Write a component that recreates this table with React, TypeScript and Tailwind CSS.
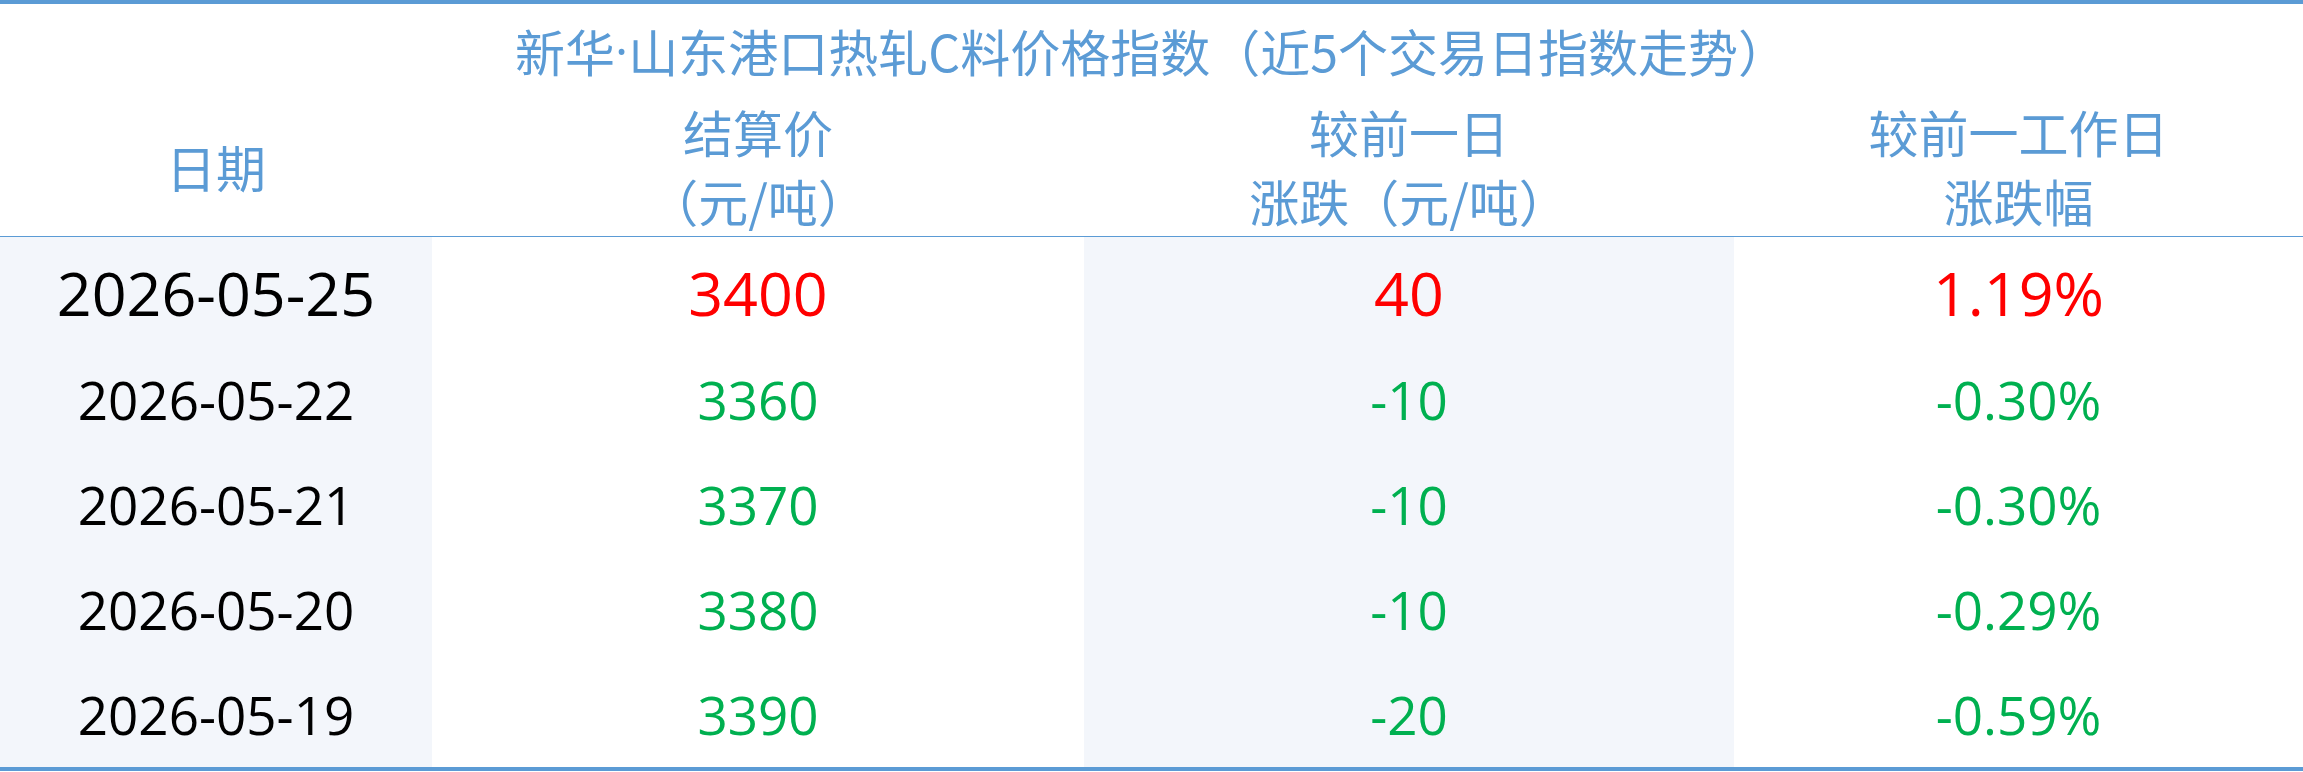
import React from "react";

const rows = [
  { date: "2026-05-25", price: "3400", diff: "40", pct: "1.19%", up: true },
  { date: "2026-05-22", price: "3360", diff: "-10", pct: "-0.30%", up: false },
  { date: "2026-05-21", price: "3370", diff: "-10", pct: "-0.30%", up: false },
  { date: "2026-05-20", price: "3380", diff: "-10", pct: "-0.29%", up: false },
  { date: "2026-05-19", price: "3390", diff: "-20", pct: "-0.59%", up: false },
];

export default function App() {
  return (
    <div className="w-[2303px] h-[772px] bg-white overflow-hidden">
      <div className="border-t-4 border-b-4 border-[#5b9bd5] flex flex-col">
        <div
          className="h-[92px] flex items-center justify-center text-[50px] text-[#5b9bd5] leading-none"
          style={{ fontFamily: '"Noto Sans CJK SC", sans-serif' }}
        >
          新华
          <span style={{ fontFamily: '"Open Sans", sans-serif' }}>·</span>
          山东港口热轧C料价格指数（近5个交易日指数走势）
        </div>
        <div
          className="h-[141px] flex border-b border-[#5b9bd5] text-[50px] text-[#5b9bd5] leading-[69px] text-center"
          style={{ fontFamily: '"Noto Sans CJK SC", sans-serif' }}
        >
          <div className="w-[432px] flex items-center justify-center">日期</div>
          <div className="w-[652px] flex flex-col items-center justify-center">
            <span>结算价</span>
            <span>（元/吨）</span>
          </div>
          <div className="w-[650px] flex flex-col items-center justify-center">
            <span>较前一日</span>
            <span>涨跌（元/吨）</span>
          </div>
          <div className="flex-1 flex flex-col items-center justify-center">
            <span>较前一工作日</span>
            <span>涨跌幅</span>
          </div>
        </div>
        {rows.map((r, i) => {
          const color = r.up ? "text-[#ff0000]" : "text-[#00b050]";
          const size = i === 0 ? "h-[110px] text-[61px]" : "h-[105px] text-[53px]";
          return (
            <div
              key={r.date}
              className={`flex ${size} leading-none`}
              style={{ fontFamily: '"Open Sans", "Noto Sans CJK SC", sans-serif' }}
            >
              <div className="w-[432px] bg-[#f3f6fb] flex items-center justify-center text-black">
                {r.date}
              </div>
              <div className={`w-[652px] flex items-center justify-center ${color}`}>{r.price}</div>
              <div className={`w-[650px] bg-[#f3f6fb] flex items-center justify-center ${color}`}>
                {r.diff}
              </div>
              <div className={`flex-1 flex items-center justify-center ${color}`}>{r.pct}</div>
            </div>
          );
        })}
      </div>
    </div>
  );
}
